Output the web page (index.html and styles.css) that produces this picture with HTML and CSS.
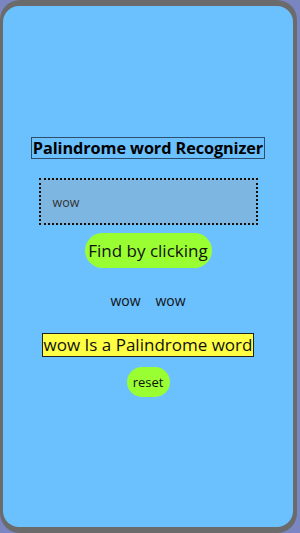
FILE: index.html
```html
<!DOCTYPE html>
<html>
<head>
<meta charset="utf-8">
<link rel="stylesheet" href="styles.css">
</head>
<body>
<div class="frame">
  <div class="screen">
    <h1 class="title">Palindrome word Recognizer</h1>
    <div class="input">wow</div>
    <div class="btn find">Find by clicking</div>
    <div class="words"><span>wow</span><span>wow</span></div>
    <div class="result">wow Is a Palindrome word</div>
    <div class="btn reset">reset</div>
  </div>
</div>
</body>
</html>
```
FILE: styles.css
```css
html, body {
  margin: 0;
  padding: 0;
  background: #7a86c2;
  width: 300px;
  height: 533px;
  overflow: hidden;
  font-family: "Open Sans", "Noto Sans", sans-serif;
}
.frame {
  width: 297px;
  height: 533px;
  box-sizing: border-box;
  background: #6b6b6b;
  border-radius: 20px;
  padding: 6px 4px 6px 3px;
}
.screen {
  height: 100%;
  background: #6bc0fe;
  border-radius: 16px;
  display: flex;
  flex-direction: column;
  align-items: center;
  padding-top: 131px;
  box-sizing: border-box;
}
.title {
  margin: 0;
  font-size: 16.3px;
  font-weight: 700;
  color: #000;
  border: 1px solid #2d4e70;
  padding: 0 1px;
  line-height: 20px;
  letter-spacing: -0.1px;
}
.input {
  margin-top: 19px;
  width: 219px;
  height: 47px;
  box-sizing: border-box;
  border: 2px dotted #111;
  background: #7eb6e2;
  font-size: 12.5px;
  color: #333;
  display: flex;
  align-items: center;
  padding-left: 12px;
  padding-top: 2px;
}
.btn {
  background: #99ff33;
  color: #111;
  border-radius: 999px;
  display: flex;
  align-items: center;
  justify-content: center;
}
.find {
  margin-top: 8px;
  width: 127px;
  height: 35px;
  font-size: 17px;
}
.words {
  margin-top: 23px;
  display: flex;
  gap: 15px;
  font-size: 14px;
  color: #111;
  line-height: 20px;
}
.result {
  margin-top: 22px;
  background: #ffff44;
  border: 1px solid #222;
  font-size: 17px;
  line-height: 22px;
  padding: 0 1px;
  color: #111;
}
.reset {
  margin-top: 10px;
  width: 43px;
  height: 30px;
  font-size: 13px;
}
```
